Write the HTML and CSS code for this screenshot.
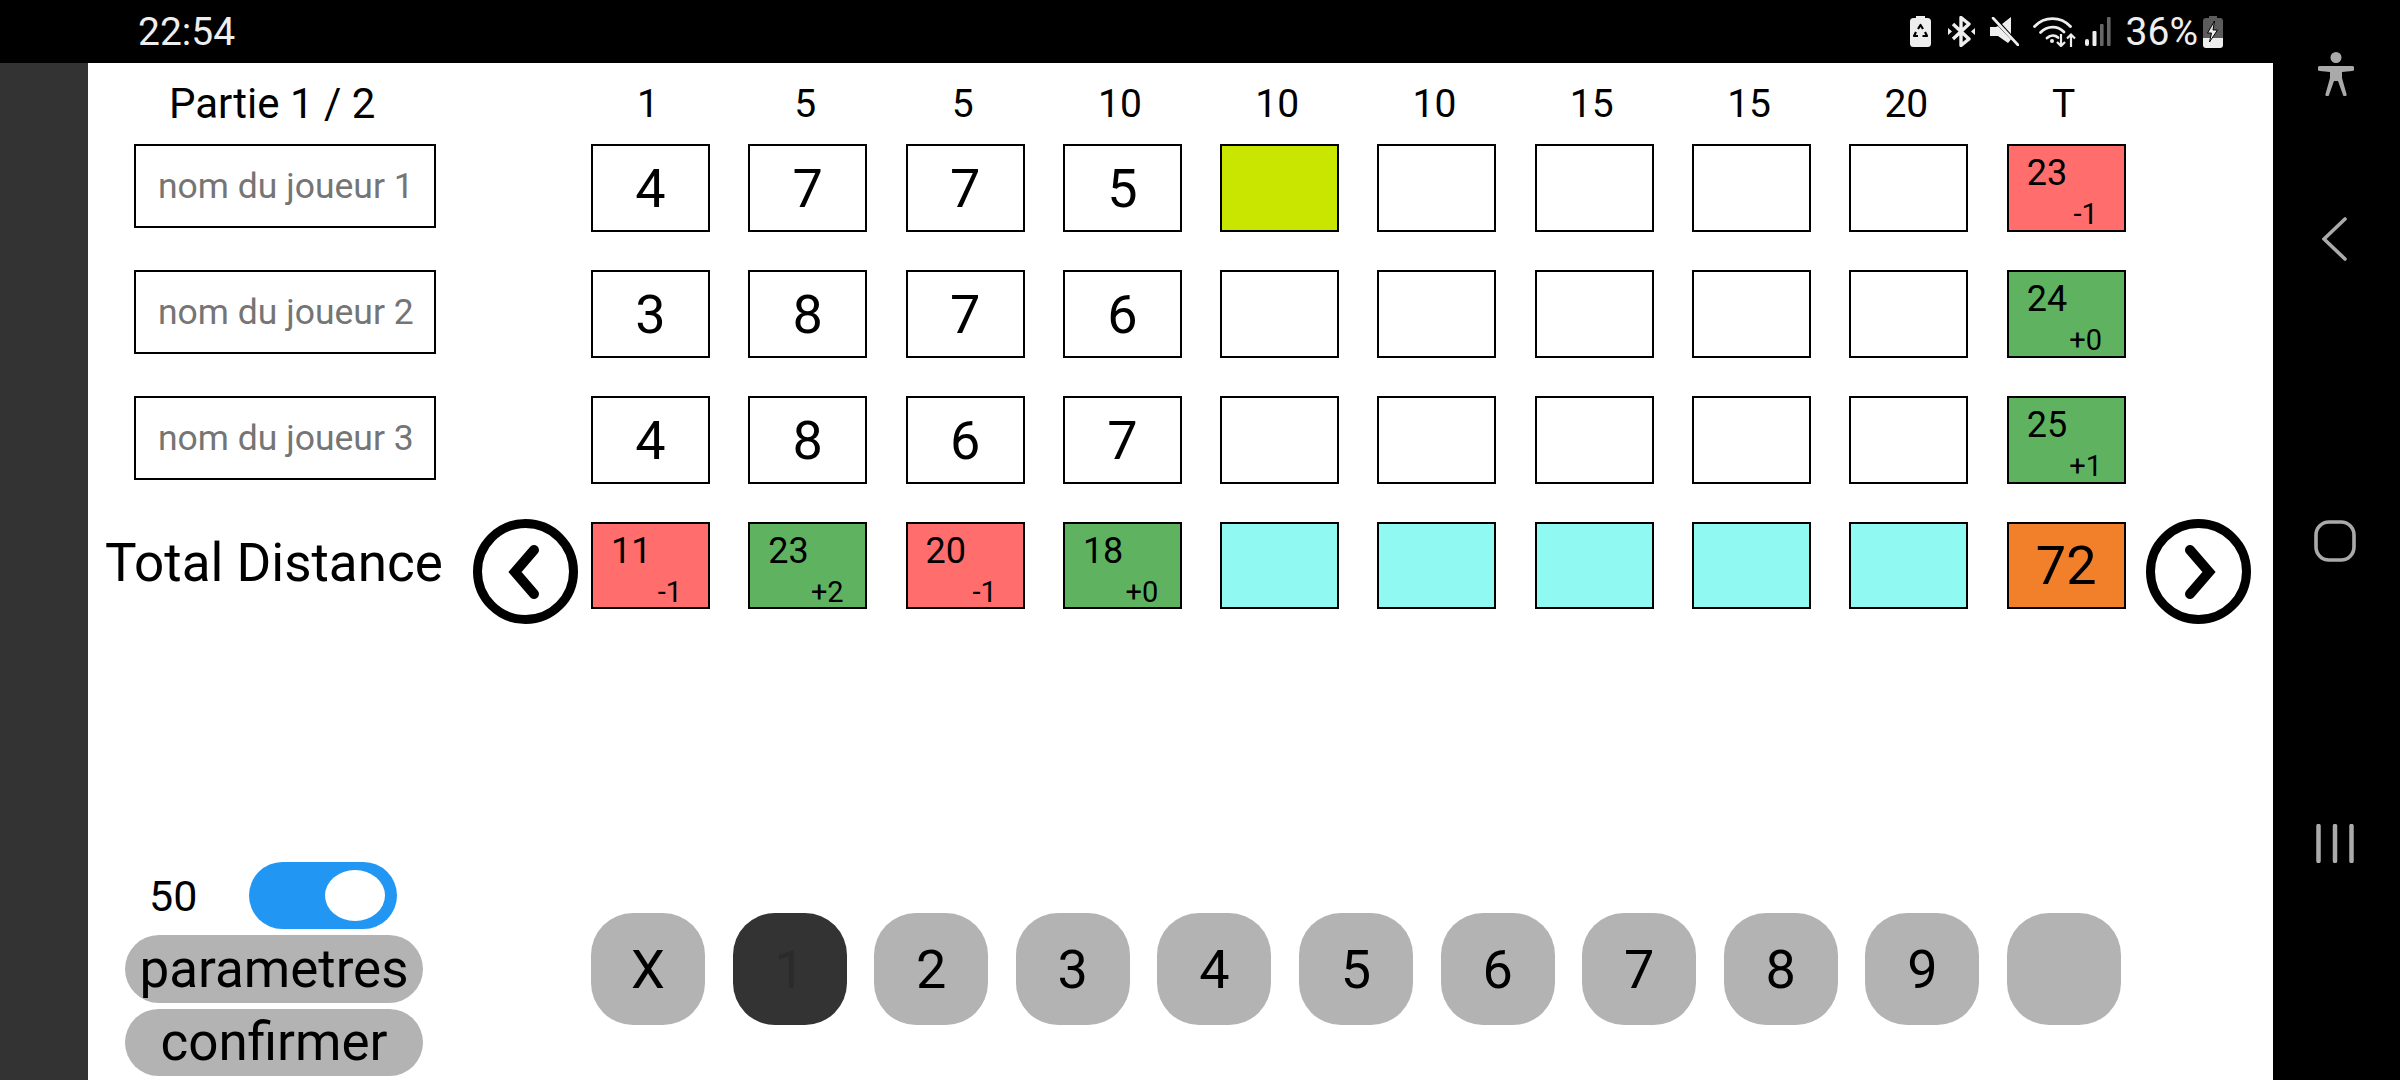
FILE: index.html
```html
<!DOCTYPE html>
<html lang="fr">
<head>
    <meta charset="UTF-8">
    <title>Partie 1 / 2</title>
    <link rel="stylesheet" href="styles.css">
</head>
<body>
    <div class="screen">
        <div class="status-bar">
            <span class="clock">22:54</span>
            <div class="status-icons">
                <svg class="ic-saver" width="21" height="31" viewBox="0 0 21 31">
                    <path fill="#eee" d="M6 0h9v2h2.500a3.500 3.500 0 0 1 3.500 3.500v22a3.500 3.500 0 0 1-3.500 3.500h-14a3.500 3.500 0 0 1-3.500-3.500v-22a3.500 3.500 0 0 1 3.500-3.500h2.500z"/>
                    <path fill="none" stroke="#000" stroke-width="2.200" stroke-linejoin="round" d="M8 13l2.500-4 2.500 4M15 16l2 4h-4.500M8 20h-4l2-4"/>
                </svg>
                <svg class="ic-bt" width="27" height="31" viewBox="0 0 27 31">
                    <path fill="none" stroke="#eee" stroke-width="3.400" stroke-linejoin="round" d="M5 8l16 15-8 6.500v-28l8 6.500-16 15"/>
                    <path fill="#eee" d="M0 12l4 3.500-4 3.500zM27 12l-4 3.500 4 3.500z"/>
                </svg>
                <svg class="ic-mute" width="29" height="29" viewBox="0 0 29 29">
                    <path fill="#eee" d="M0 10h6l2-1 13 13.500-3 3.500-10-7h-8zM12 7l9-7v17z"/>
                    <path stroke="#eee" stroke-width="2.600" stroke-linecap="round" d="M3 1l25 27"/>
                </svg>
                <svg class="ic-wifi" width="43" height="30" viewBox="0 0 43 30">
                    <g fill="none" stroke="#eee" stroke-width="2.800" stroke-linecap="round">
                        <path d="M1.500 9.500c10-10.500 26-10.500 36 0"/>
                        <path d="M7.500 15.500c7-7 17-7 23.500-.5"/>
                        <path d="M14 21c3.500-3 8-3 11-.5"/>
                    </g>
                    <circle cx="19" cy="24" r="2" fill="#eee"/>
                    <path fill="none" stroke="#eee" stroke-width="2.200" d="M28 17v12M24 25l4 4 4-4M38 30v-12M34 21.500l4-4 4 4"/>
                </svg>
                <svg class="ic-signal" width="26" height="29" viewBox="0 0 26 29">
                    <rect x="0" y="22" width="4" height="7" rx="2" fill="#eee"/>
                    <rect x="7.500" y="14" width="4" height="15" rx="1" fill="#eee"/>
                    <rect x="15" y="7" width="3.600" height="22" rx="1" fill="#666"/>
                    <rect x="22" y="0" width="3.600" height="29" rx="1" fill="#666"/>
                </svg>
                <span class="battery-pct">36%</span>
                <svg class="ic-battery" width="20" height="32" viewBox="0 0 20 32">
                    <path fill="#5c5c5c" d="M6 0h8v2h3a3 3 0 0 1 3 3v17h-20v-17a3 3 0 0 1 3-3h3z"/>
                    <path fill="#eee" d="M0 22h20v7a3 3 0 0 1-3 3h-14a3 3 0 0 1-3-3z"/>
                    <path fill="#eee" stroke="#000" stroke-width="1" d="M11.500 5l-7 12h4l-2 9 8-12h-4.500z"/>
                </svg>
            </div>
        </div>

        <div class="main">
            <div class="side-strip"></div>
            <div class="app">
                <div class="row head-row">
                    <div class="row-label part-label">Partie 1 / 2</div>
                    <div class="cells">
                        <span class="par">1</span><span class="par">5</span><span class="par">5</span><span class="par">10</span><span class="par">10</span>
                        <span class="par">10</span><span class="par">15</span><span class="par">15</span><span class="par">20</span><span class="par">T</span>
                    </div>
                </div>

                <div class="row">
                    <div class="row-label"><input class="name-input" placeholder="nom du joueur 1"></div>
                    <div class="cells">
                        <div class="cell">4</div><div class="cell">7</div><div class="cell">7</div><div class="cell">5</div>
                        <div class="cell current"></div><div class="cell"></div><div class="cell"></div><div class="cell"></div><div class="cell"></div>
                        <div class="cell split bad"><span class="sum">23</span><span class="diff">-1</span></div>
                    </div>
                </div>

                <div class="row">
                    <div class="row-label"><input class="name-input" placeholder="nom du joueur 2"></div>
                    <div class="cells">
                        <div class="cell">3</div><div class="cell">8</div><div class="cell">7</div><div class="cell">6</div>
                        <div class="cell"></div><div class="cell"></div><div class="cell"></div><div class="cell"></div><div class="cell"></div>
                        <div class="cell split good"><span class="sum">24</span><span class="diff">+0</span></div>
                    </div>
                </div>

                <div class="row">
                    <div class="row-label"><input class="name-input" placeholder="nom du joueur 3"></div>
                    <div class="cells">
                        <div class="cell">4</div><div class="cell">8</div><div class="cell">6</div><div class="cell">7</div>
                        <div class="cell"></div><div class="cell"></div><div class="cell"></div><div class="cell"></div><div class="cell"></div>
                        <div class="cell split good"><span class="sum">25</span><span class="diff">+1</span></div>
                    </div>
                </div>

                <div class="row total-row">
                    <div class="row-label total-label">
                        <span class="total-text">Total Distance</span>
                        <svg class="arrow" width="105" height="105" viewBox="0 0 105 105">
                            <circle cx="52.500" cy="52.500" r="48" fill="#fff" stroke="#000" stroke-width="9"/>
                            <path fill="none" stroke="#000" stroke-width="10" stroke-linecap="round" stroke-miterlimit="4" d="M61 31l-19 22 19 22"/>
                        </svg>
                    </div>
                    <div class="cells">
                        <div class="cell split bad"><span class="sum">11</span><span class="diff">-1</span></div>
                        <div class="cell split good"><span class="sum">23</span><span class="diff">+2</span></div>
                        <div class="cell split bad"><span class="sum">20</span><span class="diff">-1</span></div>
                        <div class="cell split good"><span class="sum">18</span><span class="diff">+0</span></div>
                        <div class="cell empty"></div><div class="cell empty"></div><div class="cell empty"></div><div class="cell empty"></div><div class="cell empty"></div>
                        <div class="cell grand">72</div>
                    </div>
                    <svg class="arrow arrow-next" width="105" height="105" viewBox="0 0 105 105">
                        <circle cx="52.500" cy="52.500" r="48" fill="#fff" stroke="#000" stroke-width="9"/>
                        <path fill="none" stroke="#000" stroke-width="10" stroke-linecap="round" stroke-miterlimit="4" d="M44 31l19 22-19 22"/>
                    </svg>
                </div>

                <div class="bottom">
                    <div class="controls">
                        <div class="toggle-row">
                            <span class="toggle-value">50</span>
                            <div class="toggle"><div class="knob"></div></div>
                        </div>
                        <button class="pill">parametres</button>
                        <button class="pill">confirmer</button>
                    </div>
                    <div class="keypad">
                        <button class="key">X</button>
                        <button class="key active">1</button>
                        <button class="key">2</button>
                        <button class="key">3</button>
                        <button class="key">4</button>
                        <button class="key">5</button>
                        <button class="key">6</button>
                        <button class="key">7</button>
                        <button class="key">8</button>
                        <button class="key">9</button>
                        <button class="key"></button>
                    </div>
                </div>
            </div>
        </div>
    </div>

    <div class="nav-bar">
        <svg class="nav-access" width="36" height="44" viewBox="0 0 36 44">
            <circle cx="18" cy="5.500" r="5.500" fill="#aaa"/>
            <path fill="#aaa" d="M2 14h32a2 2 0 0 1 0 5l-10 1v6l4.500 16a1.800 1.800 0 0 1-3.500 1l-5-14h-4l-5 14a1.800 1.800 0 0 1-3.500-1l4.500-16v-6l-10-1a2 2 0 0 1 0-5z"/>
        </svg>
        <svg class="nav-back" width="26" height="44" viewBox="0 0 26 44">
            <path fill="none" stroke="#aaa" stroke-width="3.600" stroke-linecap="round" d="M23 2l-21 20 21 20"/>
        </svg>
        <svg class="nav-home" width="42" height="42" viewBox="0 0 42 42">
            <rect x="2" y="2" width="38" height="38" rx="13" fill="none" stroke="#aaa" stroke-width="3.600"/>
        </svg>
        <svg class="nav-recents" width="38" height="39" viewBox="0 0 38 39">
            <path stroke="#aaa" stroke-width="4.500" stroke-linecap="round" d="M2.500 2v35M19 2v35M35.500 2v35"/>
        </svg>
    </div>
</body>
</html>
```

FILE: styles.css
```css
* {
    box-sizing: border-box;
}

body {
    margin: 0;
    width: 2400px;
    height: 1080px;
    display: flex;
    overflow: hidden;
    background: #000;
    color: #000;
    font-family: Roboto, sans-serif;
}

.screen {
    width: 2273px;
    display: flex;
    flex-direction: column;
}

/* status bar */
.status-bar {
    height: 63px;
    flex-shrink: 0;
    display: flex;
    align-items: center;
    justify-content: space-between;
    padding: 0 50px 0 138px;
    background: #000;
    color: #eee;
}

.clock, .battery-pct {
    font-size: 39px;
}

.status-icons {
    display: flex;
    align-items: center;
}

.ic-saver { margin-right: 17px; }
.ic-bt { margin-right: 15px; }
.ic-mute { margin-right: 14px; }
.ic-wifi { margin-right: 9px; }
.ic-signal { margin-right: 15px; }
.battery-pct { margin-right: 5px; }

/* main area */
.main {
    flex: 1;
    display: flex;
    min-height: 0;
}

.side-strip {
    width: 88px;
    background: #333;
}

.app {
    flex: 1;
    display: flex;
    flex-direction: column;
    gap: 38px;
    padding-bottom: 4px;
    background: #fff;
}

.row {
    height: 88px;
    flex-shrink: 0;
    display: flex;
    align-items: center;
}

.head-row {
    height: 81px;
    margin-bottom: -38px;
}

.total-row {
    height: 87px;
}

.total-row .cell {
    height: 87px;
}

.row-label {
    width: 503px;
    height: 100%;
    flex-shrink: 0;
    padding-left: 46px;
}

.part-label {
    display: flex;
    align-items: center;
    padding-left: 81px;
    font-size: 42px;
}

.name-input {
    display: block;
    width: 302px;
    height: 84px;
    padding: 0 0 0 22px;
    border: 2px solid #000;
    border-radius: 0;
    outline: none;
    font-family: Roboto, sans-serif;
    font-size: 35.500px;
}

.name-input::placeholder {
    color: #757575;
}

.total-label {
    display: flex;
    align-items: center;
    justify-content: space-between;
    padding: 0 13px 0 17px;
}

.total-text {
    font-size: 53px;
    margin-bottom: 5px;
}

.arrow {
    flex-shrink: 0;
    margin-top: 12px;
}

.arrow-next {
    margin-left: 20px;
}

.cells {
    display: flex;
    gap: 38.300px;
}

.par {
    width: 119px;
    padding-right: 5px;
    text-align: center;
    font-size: 39px;
}

.cell {
    width: 119px;
    height: 88px;
    display: flex;
    align-items: center;
    justify-content: center;
    border: 2px solid #000;
    font-size: 54px;
}

.current { background: #c8e600; }
.empty { background: #90faf2; }
.grand { background: #f27f2a; }
.bad { background: #ff6d6d; }
.good { background: #5fb360; }

.cell.split {
    flex-direction: column;
    align-items: flex-start;
    justify-content: flex-start;
    padding: 6px 0 0 18px;
}

.sum {
    font-size: 36px;
    line-height: 42px;
}

.diff {
    width: 60px;
    margin: 4px 0 0 29px;
    text-align: center;
    font-size: 29px;
    line-height: 33px;
}

/* bottom controls */
.bottom {
    margin-top: auto;
    display: flex;
    align-items: flex-start;
    padding-left: 37px;
}

.controls {
    width: 298px;
    display: flex;
    flex-direction: column;
    gap: 6px;
}

.toggle-row {
    height: 67px;
    display: flex;
    align-items: center;
    padding-left: 24px;
}

.toggle-value {
    width: 100px;
    font-size: 43px;
}

.toggle {
    width: 148px;
    height: 67px;
    display: flex;
    align-items: center;
    justify-content: flex-end;
    padding-right: 12px;
    border-radius: 34px;
    background: #2196f3;
}

.knob {
    width: 60px;
    height: 51px;
    border-radius: 50%;
    background: #fff;
}

.pill {
    height: 67.500px;
    padding: 0;
    border: none;
    border-radius: 34px;
    background: #b3b3b3;
    color: #000;
    font-family: Roboto, sans-serif;
    font-size: 53px;
}

.keypad {
    margin: 51px 0 0 168px;
    display: flex;
    gap: 27.600px;
}

.key {
    width: 114px;
    height: 112px;
    padding: 0;
    border: none;
    border-radius: 42px;
    background: #b3b3b3;
    color: #000;
    font-family: Roboto, sans-serif;
    font-size: 54px;
}

.key.active {
    background: #333;
    color: #2b2b2b;
}

/* navigation bar */
.nav-bar {
    width: 127px;
    height: 1080px;
    display: flex;
    flex-direction: column;
    align-items: center;
    padding: 52px 3px 0 0;
}

.nav-access { margin-left: 2px; }
.nav-back { margin-top: 121px; }
.nav-home { margin-top: 259px; }
.nav-recents { margin-top: 262px; }
```
